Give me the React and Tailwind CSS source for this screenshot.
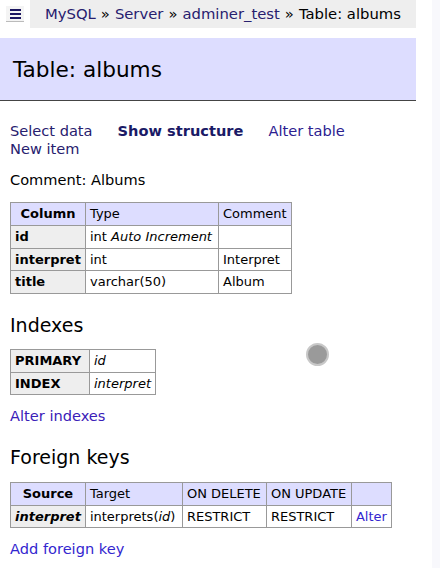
export default function App() {

    const font = { fontFamily: '"DejaVu Sans", Verdana, sans-serif' };

    return (

        <div className="relative flex min-h-[568px] w-[440px] bg-white text-black" style={font}>

            <div className="w-[416px]">

                {/* Breadcrumb */}

                <div className="flex h-[28px] items-start">

                    <div className="ml-[6px] mt-[6px] flex h-[16px] w-[18px] flex-col items-center justify-center gap-[2px] border-b border-[#bbb] bg-[#f4f4f4]">
                        <span className="h-[2px] w-[11px] bg-[#1c1660]" />
                        <span className="h-[2px] w-[11px] bg-[#1c1660]" />
                        <span className="h-[2px] w-[11px] bg-[#1c1660]" />
                    </div>

                    <div className="ml-[6px] flex h-[28px] flex-1 items-center bg-[#eee] pl-[15px] text-[14.8px] whitespace-nowrap">
                        <span className="text-[#27206e]">MySQL</span>
                        <span className="px-[5px]">»</span>
                        <span className="text-[#27206e]">Server</span>
                        <span className="px-[5px]">»</span>
                        <span className="text-[#27206e]">adminer_test</span>
                        <span className="px-[5px]">»</span>
                        <span>Table: albums</span>
                    </div>

                </div>

                {/* Heading */}

                <h2 className="mt-[10px] flex h-[63px] items-center border-b border-[#444] bg-[#ddf] pl-[13px] pt-[2px] text-[21.6px] font-normal">
                    Table: albums
                </h2>

                <div className="pl-[10px] text-[14.6px] leading-[18px]">

                    <div className="mt-[21px] flex flex-wrap gap-x-[25px]">
                        <span className="text-[#27206e]">Select data</span>
                        <span className="font-bold text-[#1a1a66]">Show structure</span>
                        <span className="text-[#2c2090]">Alter table</span>
                        <span className="text-[#27206e]">New item</span>
                    </div>

                    <p className="mt-[13px]">Comment: Albums</p>

                    <table className="mt-[13px] border-collapse border border-[#999] text-[13px] leading-[16px]">
                        <thead>
                            <tr className="h-[23px] bg-[#ddf]">
                                <th className="w-[75px] border border-[#999] px-[4px] text-center font-bold">Column</th>
                                <td className="w-[133px] border border-[#999] px-[4px]">Type</td>
                                <td className="w-[72px] border border-[#999] px-[4px]">Comment</td>
                            </tr>
                        </thead>
                        <tbody>
                            <tr className="h-[23px]">
                                <th className="border border-[#999] bg-[#eee] px-[4px] text-left font-bold">id</th>
                                <td className="border border-[#999] px-[4px]">int <i>Auto Increment</i></td>
                                <td className="border border-[#999] px-[4px]"></td>
                            </tr>
                            <tr className="h-[22px]">
                                <th className="border border-[#999] bg-[#eee] px-[4px] text-left font-bold">interpret</th>
                                <td className="border border-[#999] px-[4px]">int</td>
                                <td className="border border-[#999] px-[4px]">Interpret</td>
                            </tr>
                            <tr className="h-[23px]">
                                <th className="border border-[#999] bg-[#eee] px-[4px] text-left font-bold">title</th>
                                <td className="border border-[#999] px-[4px]">varchar(50)</td>
                                <td className="border border-[#999] px-[4px]">Album</td>
                            </tr>
                        </tbody>
                    </table>

                    {/* Indexes */}

                    <h3 className="mt-[19px] text-[19px] leading-[24px] font-normal">Indexes</h3>

                    <table className="mt-[12px] border-collapse border border-[#999] text-[13px] leading-[16px]">
                        <tbody>
                            <tr className="h-[23px]">
                                <th className="w-[79px] border border-[#999] bg-[#eee] px-[4px] text-left font-bold">PRIMARY</th>
                                <td className="w-[66px] border border-[#999] px-[4px]"><i>id</i></td>
                            </tr>
                            <tr className="h-[22px]">
                                <th className="border border-[#999] bg-[#eee] px-[4px] text-left font-bold">INDEX</th>
                                <td className="border border-[#999] px-[4px]"><i>interpret</i></td>
                            </tr>
                        </tbody>
                    </table>

                    <p className="mt-[12px] text-[#3a20b8]">Alter indexes</p>

                    {/* Foreign keys */}

                    <h3 className="mt-[20px] text-[19px] leading-[24px] font-normal">Foreign keys</h3>

                    <table className="mt-[13px] border-collapse border border-[#999] text-[13px] leading-[16px]">
                        <thead>
                            <tr className="h-[23px] bg-[#ddf]">
                                <th className="w-[74px] border border-[#999] px-[4px] text-center font-bold">Source</th>
                                <td className="w-[97px] border border-[#999] px-[4px]">Target</td>
                                <td className="w-[84px] border border-[#999] px-[4px]">ON DELETE</td>
                                <td className="w-[85px] border border-[#999] px-[4px]">ON UPDATE</td>
                                <td className="w-[40px] border border-[#999] px-[4px]"></td>
                            </tr>
                        </thead>
                        <tbody>
                            <tr className="h-[22px]">
                                <th className="border border-[#999] bg-[#eee] px-[4px] text-left font-bold"><i>interpret</i></th>
                                <td className="border border-[#999] px-[4px]">interprets(<i>id</i>)</td>
                                <td className="border border-[#999] px-[4px]">RESTRICT</td>
                                <td className="border border-[#999] px-[4px]">RESTRICT</td>
                                <td className="border border-[#999] px-[4px] text-[#3326cf]">Alter</td>
                            </tr>
                        </tbody>
                    </table>

                    <p className="mt-[12px] text-[#3326cf]">Add foreign key</p>

                </div>

            </div>

            <div className="ml-[16px] flex-1 bg-[#f8f8fc]" />

            {/* cursor marker */}

            <div className="absolute left-[306px] top-[343px] h-[23px] w-[23px] rounded-full border-2 border-[#c8c8c8] bg-[#9a9a9a]" />

        </div>

    );

}
